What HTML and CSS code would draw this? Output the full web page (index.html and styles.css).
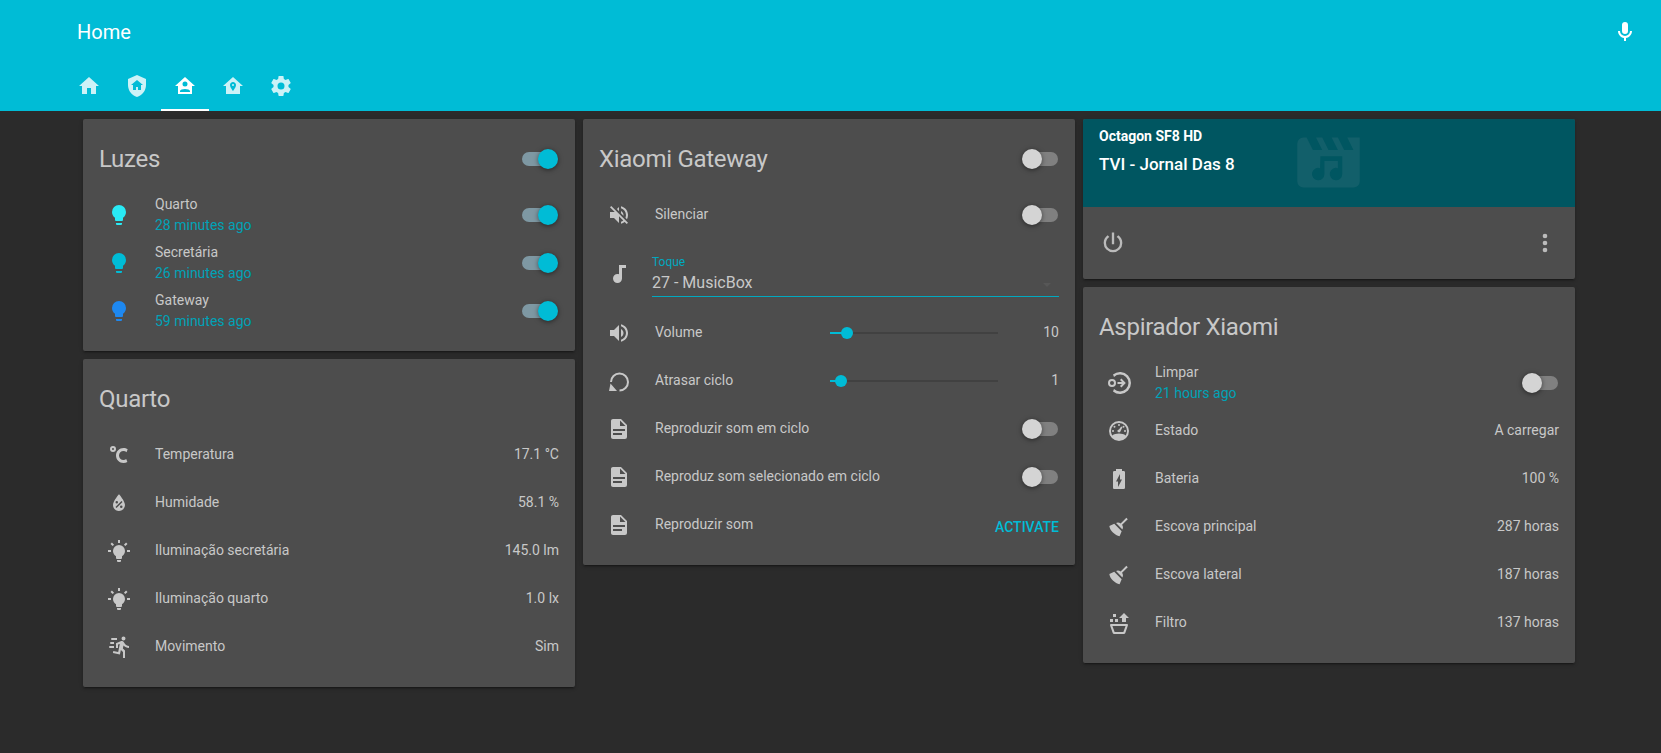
FILE: index.html

```html
<!DOCTYPE html>
<html lang="pt">
<head>
    <meta charset="UTF-8">
    <title>Home</title>
    <link rel="stylesheet" href="styles.css">
</head>
<body>
    <header class="appbar">
        <div class="toolbar">
            <div class="appbar-title">Home</div>
            <svg class="icon mic" viewBox="0 0 24 24"><path d="M12,2A3,3 0 0,1 15,5V11A3,3 0 0,1 12,14A3,3 0 0,1 9,11V5A3,3 0 0,1 12,2M19,11C19,14.53 16.39,17.44 13,17.93V21H11V17.93C7.61,17.44 5,14.53 5,11H7A5,5 0 0,0 12,16A5,5 0 0,0 17,11H19Z"/></svg>
        </div>
        <nav class="tabs">
            <div class="tab"><svg class="icon" viewBox="0 0 24 24"><path d="M10,20V14H14V20H19V12H22L12,3L2,12H5V20H10Z"/></svg></div>
            <div class="tab"><svg class="icon" viewBox="0 0 24 24"><path d="M11,13H13V16H16V11H18L12,6L6,11H8V16H11V13M12,1L21,5V11C21,16.55 17.16,21.74 12,23C6.84,21.74 3,16.55 3,11V5L12,1Z"/></svg></div>
            <div class="tab active"><svg class="icon" viewBox="0 0 24 24"><path fill-rule="evenodd" d="M12,3L2,12H5V20H19V12H22L12,3M12,7.5A2.5,2.5 0 0,1 14.5,10A2.5,2.5 0 0,1 12,12.5A2.5,2.5 0 0,1 9.5,10A2.5,2.5 0 0,1 12,7.5M7,18V17C7,15.67 9.67,15 12,15C14.33,15 17,15.67 17,17V18H7Z"/></svg></div>
            <div class="tab"><svg class="icon" viewBox="0 0 24 24"><path fill-rule="evenodd" d="M12,3L2,12H5V20H19V12H22L12,3M12,8C13.66,8 15,9.34 15,11C15,13.25 12,17 12,17C12,17 9,13.25 9,11C9,9.34 10.34,8 12,8M12,10A1,1 0 0,0 11,11A1,1 0 0,0 12,12A1,1 0 0,0 13,11A1,1 0 0,0 12,10Z"/></svg></div>
            <div class="tab"><svg class="icon" viewBox="0 0 24 24"><path d="M12,15.5A3.5,3.5 0 0,1 8.5,12A3.5,3.5 0 0,1 12,8.5A3.5,3.5 0 0,1 15.5,12A3.5,3.5 0 0,1 12,15.5M19.43,12.97C19.47,12.65 19.5,12.33 19.5,12C19.5,11.67 19.47,11.34 19.43,11L21.54,9.37C21.73,9.22 21.78,8.95 21.66,8.73L19.66,5.27C19.54,5.05 19.27,4.96 19.05,5.05L16.56,6.05C16.04,5.66 15.5,5.32 14.87,5.07L14.5,2.42C14.46,2.18 14.25,2 14,2H10C9.75,2 9.54,2.18 9.5,2.42L9.13,5.07C8.5,5.32 7.96,5.66 7.44,6.05L4.95,5.05C4.73,4.96 4.46,5.05 4.34,5.27L2.34,8.73C2.21,8.95 2.27,9.22 2.46,9.37L4.57,11C4.53,11.34 4.5,11.67 4.5,12C4.5,12.33 4.53,12.65 4.57,12.97L2.46,14.63C2.27,14.78 2.21,15.05 2.34,15.27L4.34,18.73C4.46,18.95 4.73,19.03 4.95,18.95L7.44,17.94C7.96,18.34 8.5,18.68 9.13,18.93L9.5,21.58C9.54,21.82 9.75,22 10,22H14C14.25,22 14.46,21.82 14.5,21.58L14.87,18.93C15.5,18.67 16.04,18.34 16.56,17.94L19.05,18.95C19.27,19.03 19.54,18.95 19.66,18.73L21.66,15.27C21.78,15.05 21.73,14.78 21.54,14.63L19.43,12.97Z"/></svg></div>
        </nav>
    </header>

    <main class="columns">
        <div class="column">
            <section class="card">
                <div class="card-header">
                    <h2>Luzes</h2>
                    <div class="switch on"></div>
                </div>
                <div class="rows">
                    <div class="row">
                        <svg class="icon bulb-a" viewBox="0 0 24 24"><path d="M12,2A7,7 0 0,0 5,9C5,11.38 6.19,13.47 8,14.74V17A1,1 0 0,0 9,18H15A1,1 0 0,0 16,17V14.74C17.81,13.47 19,11.38 19,9A7,7 0 0,0 12,2M9,21A1,1 0 0,0 10,22H14A1,1 0 0,0 15,21V20H9V21Z"/></svg>
                        <div class="name two">Quarto<div class="secondary">28 minutes ago</div></div>
                        <div class="switch on"></div>
                    </div>
                    <div class="row">
                        <svg class="icon bulb-b" viewBox="0 0 24 24"><path d="M12,2A7,7 0 0,0 5,9C5,11.38 6.19,13.47 8,14.74V17A1,1 0 0,0 9,18H15A1,1 0 0,0 16,17V14.74C17.81,13.47 19,11.38 19,9A7,7 0 0,0 12,2M9,21A1,1 0 0,0 10,22H14A1,1 0 0,0 15,21V20H9V21Z"/></svg>
                        <div class="name two">Secretária<div class="secondary">26 minutes ago</div></div>
                        <div class="switch on"></div>
                    </div>
                    <div class="row">
                        <svg class="icon bulb-c" viewBox="0 0 24 24"><path d="M12,2A7,7 0 0,0 5,9C5,11.38 6.19,13.47 8,14.74V17A1,1 0 0,0 9,18H15A1,1 0 0,0 16,17V14.74C17.81,13.47 19,11.38 19,9A7,7 0 0,0 12,2M9,21A1,1 0 0,0 10,22H14A1,1 0 0,0 15,21V20H9V21Z"/></svg>
                        <div class="name two">Gateway<div class="secondary">59 minutes ago</div></div>
                        <div class="switch on"></div>
                    </div>
                </div>
            </section>

            <section class="card">
                <div class="card-header"><h2>Quarto</h2></div>
                <div class="rows">
                    <div class="row">
                        <svg class="icon" viewBox="0 0 24 24"><path fill-rule="evenodd" d="M16.5,5C18.05,5 19.5,5.47 20.69,6.28L19.53,9.17C18.73,8.44 17.67,8 16.5,8C14,8 12,10 12,12.5C12,15 14,17 16.5,17C17.53,17 18.47,16.66 19.23,16.08L20.37,18.93C19.24,19.61 17.92,20 16.5,20C12.36,20 9,16.64 9,12.5C9,8.36 12.36,5 16.5,5M6,3A3,3 0 0,1 9,6A3,3 0 0,1 6,9A3,3 0 0,1 3,6A3,3 0 0,1 6,3M6,5A1,1 0 0,0 5,6A1,1 0 0,0 6,7A1,1 0 0,0 7,6A1,1 0 0,0 6,5Z"/></svg>
                        <div class="name">Temperatura</div>
                        <div class="value">17.1 °C</div>
                    </div>
                    <div class="row">
                        <svg class="icon" viewBox="0 0 24 24"><path fill-rule="evenodd" d="M12,3.25C12,3.25 6,10 6,14C6,17.32 8.69,20 12,20A6,6 0 0,0 18,14C18,10 12,3.25 12,3.25M14.47,9.97L15.53,11.03L9.53,17.03L8.47,15.97L14.47,9.97M9.75,10A1.25,1.25 0 0,1 11,11.25A1.25,1.25 0 0,1 9.75,12.5A1.25,1.25 0 0,1 8.5,11.25A1.25,1.25 0 0,1 9.75,10M14.25,14.5A1.25,1.25 0 0,1 15.5,15.75A1.25,1.25 0 0,1 14.25,17A1.25,1.25 0 0,1 13,15.75A1.25,1.25 0 0,1 14.25,14.5Z"/></svg>
                        <div class="name">Humidade</div>
                        <div class="value">58.1 %</div>
                    </div>
                    <div class="row">
                        <svg class="icon" viewBox="0 0 24 24"><path d="M12,6A6,6 0 0,1 18,12C18,14.22 16.79,16.16 15,17.2V19A1,1 0 0,1 14,20H10A1,1 0 0,1 9,19V17.2C7.21,16.16 6,14.22 6,12A6,6 0 0,1 12,6M14,21V22A1,1 0 0,1 13,23H11A1,1 0 0,1 10,22V21H14M20,11H23V13H20V11M1,11H4V13H1V11M13,1V4H11V1H13M4.92,3.5L7.05,5.64L5.63,7.05L3.5,4.93L4.92,3.5M16.95,5.63L19.07,3.5L20.5,4.93L18.37,7.05L16.95,5.63Z"/></svg>
                        <div class="name">Iluminação secretária</div>
                        <div class="value">145.0 lm</div>
                    </div>
                    <div class="row">
                        <svg class="icon" viewBox="0 0 24 24"><path d="M12,6A6,6 0 0,1 18,12C18,14.22 16.79,16.16 15,17.2V19A1,1 0 0,1 14,20H10A1,1 0 0,1 9,19V17.2C7.21,16.16 6,14.22 6,12A6,6 0 0,1 12,6M14,21V22A1,1 0 0,1 13,23H11A1,1 0 0,1 10,22V21H14M20,11H23V13H20V11M1,11H4V13H1V11M13,1V4H11V1H13M4.92,3.5L7.05,5.64L5.63,7.05L3.5,4.93L4.92,3.5M16.95,5.63L19.07,3.5L20.5,4.93L18.37,7.05L16.95,5.63Z"/></svg>
                        <div class="name">Iluminação quarto</div>
                        <div class="value">1.0 lx</div>
                    </div>
                    <div class="row">
                        <svg class="icon" viewBox="0 0 24 24"><path d="M16.5,5.5A2,2 0 0,0 18.5,3.5A2,2 0 0,0 16.5,1.5A2,2 0 0,0 14.5,3.5A2,2 0 0,0 16.5,5.5M12.9,19.4L13.9,15L16,17V23H18V15.5L15.9,13.5L16.5,10.5C17.89,12.09 19.89,13 22,13V11C20.24,11.03 18.6,10.11 17.7,8.6L16.7,7C16.34,6.4 15.7,6 15,6C14.7,6 14.5,6.1 14.2,6.1L9,8.3V13H11V9.6L12.8,8.9L11.2,17L6.3,16L5.9,18L12.9,19.4M4,9A1,1 0 0,1 3,8A1,1 0 0,1 4,7H7V9H4M5,5A1,1 0 0,1 4,4A1,1 0 0,1 5,3H10V5H5M3,13A1,1 0 0,1 2,12A1,1 0 0,1 3,11H7V13H3Z"/></svg>
                        <div class="name">Movimento</div>
                        <div class="value">Sim</div>
                    </div>
                </div>
            </section>
        </div>

        <div class="column">
            <section class="card">
                <div class="card-header">
                    <h2>Xiaomi Gateway</h2>
                    <div class="switch"></div>
                </div>
                <div class="rows">
                    <div class="row">
                        <svg class="icon" viewBox="0 0 24 24"><path d="M12,4L9.91,6.09L12,8.18M4.27,3L3,4.27L7.73,9H3V15H7L12,20V13.27L16.25,17.53C15.58,18.04 14.83,18.46 14,18.7V20.77C15.38,20.45 16.63,19.82 17.68,18.96L19.73,21L21,19.73L12,10.73M19,12C19,12.94 18.8,13.82 18.46,14.64L19.97,16.15C20.62,14.91 21,13.5 21,12C21,7.72 18,4.14 14,3.23V5.29C16.89,6.15 19,8.83 19,12M16.5,12C16.5,10.23 15.5,8.71 14,7.97V10.18L16.45,12.63C16.5,12.43 16.5,12.21 16.5,12Z"/></svg>
                        <div class="name">Silenciar</div>
                        <div class="switch"></div>
                    </div>
                    <div class="row select-row">
                        <svg class="icon" viewBox="0 0 24 24"><path d="M12,3V12.26C11.5,12.09 11,12 10.5,12C8,12 6,14 6,16.5C6,19 8,21 10.5,21C13,21 15,19 15,16.5V6H19V3H12Z"/></svg>
                        <div class="select">
                            <div class="select-label">Toque</div>
                            <div class="select-value">27 - MusicBox<span class="select-arrow"></span></div>
                        </div>
                    </div>
                    <div class="row">
                        <svg class="icon" viewBox="0 0 24 24"><path d="M14,3.23V5.29C16.89,6.15 19,8.83 19,12C19,15.17 16.89,17.84 14,18.7V20.77C18,19.86 21,16.28 21,12C21,7.72 18,4.14 14,3.23M16.5,12C16.5,10.23 15.5,8.71 14,7.97V16C15.5,15.29 16.5,13.76 16.5,12M3,9V15H7L12,20V4L7,9H3Z"/></svg>
                        <div class="name">Volume</div>
                        <div class="slider"><div class="slider-fill vol"></div></div>
                        <div class="slider-value">10</div>
                    </div>
                    <div class="row">
                        <svg class="icon" viewBox="0 0 24 24"><path d="M12.5,22.5A9.5,9.5 0 1,0 3,13H5A7.5,7.5 0 1,1 12.5,20.5ZM2,22H10L3.5,14.5Z"/></svg>
                        <div class="name">Atrasar ciclo</div>
                        <div class="slider"><div class="slider-fill delay"></div></div>
                        <div class="slider-value">1</div>
                    </div>
                    <div class="row">
                        <svg class="icon" viewBox="0 0 24 24"><path d="M13,9H18.5L13,3.5V9M6,2H14L20,8V20A2,2 0 0,1 18,22H6C4.89,22 4,21.1 4,20V4C4,2.89 4.89,2 6,2M15,18V16H6V18H15M18,14V12H6V14H18Z"/></svg>
                        <div class="name">Reproduzir som em ciclo</div>
                        <div class="switch"></div>
                    </div>
                    <div class="row">
                        <svg class="icon" viewBox="0 0 24 24"><path d="M13,9H18.5L13,3.5V9M6,2H14L20,8V20A2,2 0 0,1 18,22H6C4.89,22 4,21.1 4,20V4C4,2.89 4.89,2 6,2M15,18V16H6V18H15M18,14V12H6V14H18Z"/></svg>
                        <div class="name">Reproduz som selecionado em ciclo</div>
                        <div class="switch"></div>
                    </div>
                    <div class="row">
                        <svg class="icon" viewBox="0 0 24 24"><path d="M13,9H18.5L13,3.5V9M6,2H14L20,8V20A2,2 0 0,1 18,22H6C4.89,22 4,21.1 4,20V4C4,2.89 4.89,2 6,2M15,18V16H6V18H15M18,14V12H6V14H18Z"/></svg>
                        <div class="name">Reproduzir som</div>
                        <div class="action">ACTIVATE</div>
                    </div>
                </div>
            </section>
        </div>

        <div class="column">
            <section class="card">
                <div class="media-art">
                    <div class="media-source">Octagon SF8 HD</div>
                    <div class="media-title">TVI - Jornal Das 8</div>
                    <svg class="media-icon" viewBox="0 0 24 24"><path fill-rule="evenodd" d="M18,4L20,8H17L15,4H13L15,8H12L10,4H8L10,8H7L5,4H4A2,2 0 0,0 2,6V18A2,2 0 0,0 4,20H20A2,2 0 0,0 22,18V4H18ZM9.4,10H16.4V15.7A2,2 0 1,1 15,13.8V11.5H10.7V15.7A2,2 0 1,1 9.3,13.8Z"/></svg>
                </div>
                <div class="media-controls">
                    <svg class="icon" viewBox="0 0 24 24"><path d="M16.56,5.44L15.11,6.89C16.84,7.94 18,9.83 18,12A6,6 0 0,1 12,18A6,6 0 0,1 6,12C6,9.83 7.16,7.94 8.88,6.88L7.44,5.44C5.36,6.88 4,9.28 4,12A8,8 0 0,0 12,20A8,8 0 0,0 20,12C20,9.28 18.64,6.88 16.56,5.44M13,3H11V13H13"/></svg>
                    <svg class="icon" viewBox="0 0 24 24"><path d="M12,16A2,2 0 0,1 14,18A2,2 0 0,1 12,20A2,2 0 0,1 10,18A2,2 0 0,1 12,16M12,10A2,2 0 0,1 14,12A2,2 0 0,1 12,14A2,2 0 0,1 10,12A2,2 0 0,1 12,10M12,4A2,2 0 0,1 14,6A2,2 0 0,1 12,8A2,2 0 0,1 10,6A2,2 0 0,1 12,4Z"/></svg>
                </div>
            </section>

            <section class="card">
                <div class="card-header"><h2>Aspirador Xiaomi</h2></div>
                <div class="rows">
                    <div class="row">
                        <svg class="icon" viewBox="0 0 24 24"><path fill-rule="evenodd" d="M6,3.51A11,11 0 1,1 6,20.49L7,18.02A8.5,8.5 0 1,0 7,5.98ZM5,8A4,4 0 1,1 5,16A4,4 0 1,1 5,8ZM5,10A2,2 0 1,0 5,14A2,2 0 1,0 5,10ZM10.5,11H15L13,9L14.4,7.6L18.8,12L14.4,16.4L13,15L15,13H10.5Z"/></svg>
                        <div class="name two">Limpar<div class="secondary">21 hours ago</div></div>
                        <div class="switch"></div>
                    </div>
                    <div class="row">
                        <svg class="icon" viewBox="0 0 24 24"><path fill-rule="evenodd" d="M12,2A10,10 0 0,1 22,12A10,10 0 0,1 12,22A10,10 0 0,1 2,12A10,10 0 0,1 12,2M12,4A8,8 0 0,0 4,12C4,13.6 4.5,15.1 5.3,16.4C7,15.2 9.4,14.5 12,14.5C14.6,14.5 17,15.2 18.7,16.4C19.5,15.1 20,13.6 20,12A8,8 0 0,0 12,4M12,5A1,1 0 0,1 13,6A1,1 0 0,1 12,7A1,1 0 0,1 11,6A1,1 0 0,1 12,5M7.5,6.8A1,1 0 0,1 8.5,7.8A1,1 0 0,1 7.5,8.8A1,1 0 0,1 6.5,7.8A1,1 0 0,1 7.5,6.8M16.5,6.8A1,1 0 0,1 17.5,7.8A1,1 0 0,1 16.5,8.8A1,1 0 0,1 15.5,7.8A1,1 0 0,1 16.5,6.8M6,11A1,1 0 0,1 7,12A1,1 0 0,1 6,13A1,1 0 0,1 5,12A1,1 0 0,1 6,11M18,11A1,1 0 0,1 19,12A1,1 0 0,1 18,13A1,1 0 0,1 17,12A1,1 0 0,1 18,11M14.2,7.6L15.4,8.2L13.4,12.5A1.6,1.6 0 0,1 10.4,12A1.6,1.6 0 0,1 12,10.4Z"/></svg>
                        <div class="name">Estado</div>
                        <div class="value">A carregar</div>
                    </div>
                    <div class="row">
                        <svg class="icon" viewBox="0 0 24 24"><path fill-rule="evenodd" d="M16.67,4H15V2H9V4H7.33A1.33,1.33 0 0,0 6,5.33V20.66C6,21.4 6.6,22 7.33,22H16.67A1.33,1.33 0 0,0 18,20.67V5.33C18,4.6 17.4,4 16.67,4M11,20V14.5H9L13,7V12.5H15L11,20Z"/></svg>
                        <div class="name">Bateria</div>
                        <div class="value">100 %</div>
                    </div>
                    <div class="row">
                        <svg class="icon" viewBox="0 0 24 24"><path d="M19.36,2.72L20.78,4.14L15.06,9.85C16.13,11.39 16.28,13.24 15.38,14.44L9.06,8.12C10.26,7.22 12.11,7.37 13.65,8.44L19.36,2.72M5.93,17.57C3.92,15.56 2.69,13.16 2.35,10.92L7.23,8.83L14.67,16.27L12.58,21.15C10.34,20.81 7.94,19.58 5.93,17.57Z"/></svg>
                        <div class="name">Escova principal</div>
                        <div class="value">287 horas</div>
                    </div>
                    <div class="row">
                        <svg class="icon" viewBox="0 0 24 24"><path d="M19.36,2.72L20.78,4.14L15.06,9.85C16.13,11.39 16.28,13.24 15.38,14.44L9.06,8.12C10.26,7.22 12.11,7.37 13.65,8.44L19.36,2.72M5.93,17.57C3.92,15.56 2.69,13.16 2.35,10.92L7.23,8.83L14.67,16.27L12.58,21.15C10.34,20.81 7.94,19.58 5.93,17.57Z"/></svg>
                        <div class="name">Escova lateral</div>
                        <div class="value">187 horas</div>
                    </div>
                    <div class="row">
                        <svg class="icon" viewBox="0 0 24 24"><path d="M3,8H6V11H3V8M8,8H11V11H8V8M6,3H9V6H6V3M17,2L22,7H19V11H15V7H12L17,2M7.5,23C6.72,23 6.04,22.55 5.71,21.9L3.1,14.44L3,14A1,1 0 0,1 4,13H20A1,1 0 0,1 21,14L20.96,14.29L18.29,21.9C17.96,22.55 17.28,23 16.5,23H7.5M7.61,21H16.39L18.57,15H5.41L7.61,21Z"/></svg>
                        <div class="name">Filtro</div>
                        <div class="value">137 horas</div>
                    </div>
                </div>
            </section>
        </div>
    </main>
</body>
</html>
```

FILE: styles.css

```css
* {
    box-sizing: border-box;
}
body {
    margin: 0;
    min-height: 753px;
    background: #2b2b2b;
    color: #c8c8c8;
    font-family: Roboto, sans-serif;
    font-size: 14px;
}
.icon {
    width: 24px;
    height: 24px;
    fill: currentColor;
    flex: none;
}

/* top bar */
.appbar {
    height: 111px;
    background: #00bcd6;
    color: #fff;
}
.toolbar {
    height: 63px;
    padding: 0 24px 0 77px;
    display: flex;
    align-items: center;
    justify-content: space-between;
}
.appbar-title {
    font-size: 20px;
}
.tabs {
    height: 48px;
    padding-left: 65px;
    display: flex;
}
.tab {
    width: 48px;
    display: flex;
    align-items: center;
    justify-content: center;
    color: #ccf2f7;
    border-bottom: 2px solid transparent;
}
.tab.active {
    color: #fff;
    border-bottom-color: #fff;
}

/* columns */
.columns {
    padding: 8px 86px 0 83px;
    display: flex;
    gap: 8px;
    align-items: flex-start;
}
.column {
    flex: 1;
    display: flex;
    flex-direction: column;
    gap: 8px;
}
.card {
    background: #4d4d4d;
    border-radius: 2px;
    box-shadow: 0 2px 2px rgba(0,0,0,0.14), 0 1px 5px rgba(0,0,0,0.12), 0 3px 1px -2px rgba(0,0,0,0.2);
}
.card-header {
    padding: 20px 16px 16px;
    height: 76px;
    display: flex;
    align-items: center;
    justify-content: space-between;
}
.card-header h2 {
    margin: 0;
    font-size: 24px;
    font-weight: 400;
    line-height: 40px;
    letter-spacing: -0.012em;
}
.rows {
    padding: 0 16px 20px;
    display: flex;
    flex-direction: column;
    gap: 8px;
}
.row {
    height: 40px;
    display: flex;
    align-items: center;
}
.row > .icon {
    margin: 0 8px;
}
.name {
    flex: 1;
    margin-left: 16px;
    padding-bottom: 2px;
    line-height: 20px;
}
.name.two {
    margin-top: -1px;
    padding-bottom: 0;
}
.secondary {
    margin-top: 1px;
    color: #00a2b7;
}
.value {
    padding-bottom: 2px;
    text-align: right;
}
.action {
    margin-top: 3px;
    color: #00bcd6;
    font-weight: 500;
}
.bulb-a { color: #29eaf5; }
.bulb-b { color: #00bcd6; }
.bulb-c { color: #1e88f0; }

/* toggles */
.switch {
    position: relative;
    width: 36px;
    height: 20px;
    margin-right: 1px;
    flex: none;
}
.switch::before {
    content: "";
    position: absolute;
    top: 3px;
    right: 0;
    width: 33px;
    height: 14px;
    border-radius: 7px;
    background: #808080;
}
.switch::after {
    content: "";
    position: absolute;
    top: 0;
    left: 0;
    width: 20px;
    height: 20px;
    border-radius: 50%;
    background: #d4d4d4;
    box-shadow: 0 1px 5px rgba(0,0,0,0.5);
}
.switch.on::before {
    left: 0;
    right: auto;
    background: #7e98a3;
}
.switch.on::after {
    left: 16px;
    background: #00bcd6;
}

/* select */
.select-row {
    height: 62px;
}
.select {
    flex: 1;
    margin-left: 13px;
    align-self: flex-start;
    padding-top: 11px;
}
.select-label {
    color: #00a9c0;
    font-size: 12px;
    line-height: 16px;
}
.select-value {
    position: relative;
    height: 26px;
    margin-top: 1px;
    font-size: 16px;
    line-height: 24px;
    border-bottom: 1px solid #00a9c0;
}
.select-arrow {
    position: absolute;
    right: 8px;
    top: 12px;
    border-left: 4px solid transparent;
    border-right: 4px solid transparent;
    border-top: 4px solid #575757;
}

/* sliders */
.slider {
    position: relative;
    width: 168px;
    height: 2px;
    background: #414141;
    flex: none;
}
.slider-fill {
    height: 2px;
    background: #00bcd6;
}
.slider-fill.vol {
    width: 17px;
}
.slider-fill.delay {
    width: 11px;
}
.slider-fill::after {
    content: "";
    position: absolute;
    top: -5px;
    width: 12px;
    height: 12px;
    border-radius: 50%;
    background: #00bcd6;
}
.slider-fill.vol::after {
    left: 11px;
}
.slider-fill.delay::after {
    left: 5px;
}
.slider-value {
    width: 61px;
    padding-bottom: 2px;
    text-align: right;
}

/* media card */
.media-art {
    position: relative;
    height: 88px;
    padding: 7px 16px 0;
    background: #005661;
    border-radius: 2px 2px 0 0;
    color: #fff;
    font-weight: 500;
}
.media-source {
    font-weight: 700;
    line-height: 20px;
}
.media-title {
    margin-top: 6px;
    font-size: 17px;
    line-height: 24px;
}
.media-icon {
    position: absolute;
    left: 208px;
    top: 6px;
    width: 75px;
    height: 75px;
    fill: #125f6a;
}
.media-controls {
    height: 72px;
    padding: 0 16px;
    display: flex;
    align-items: center;
    justify-content: space-between;
    color: #bbb;
}
.media-controls .icon {
    width: 28px;
    height: 28px;
}
```
